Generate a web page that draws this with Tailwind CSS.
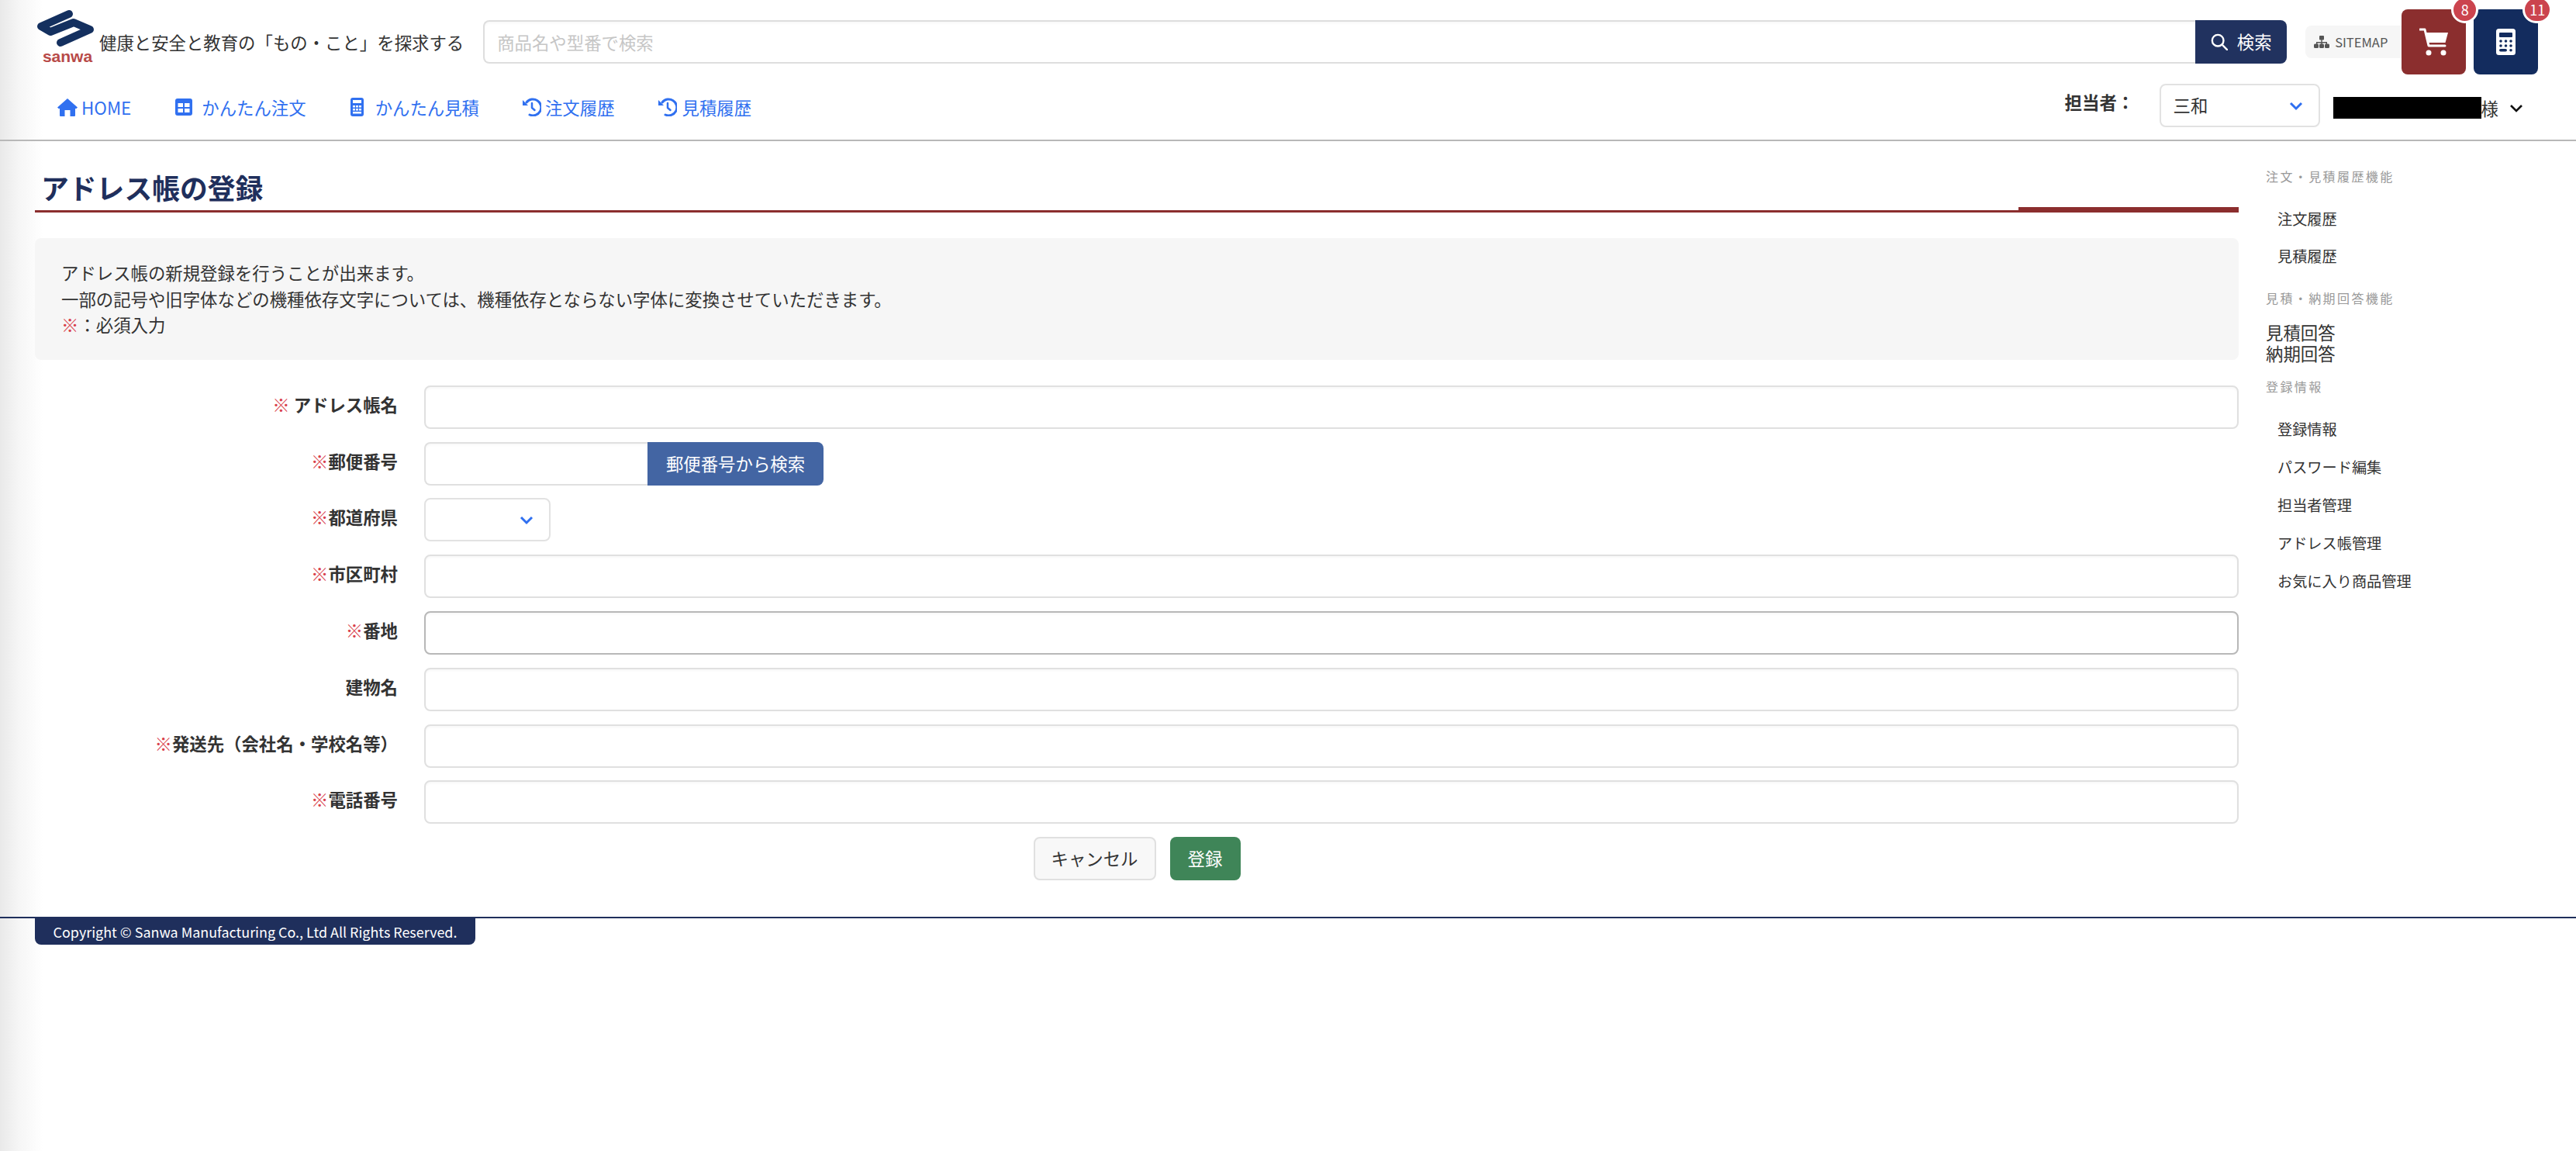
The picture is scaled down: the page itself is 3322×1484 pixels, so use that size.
<!DOCTYPE html>
<html lang="ja">
<head>
    <meta charset="UTF-8">
    <title>アドレス帳の登録</title>
    <script src="https://cdn.jsdelivr.net/npm/@tailwindcss/browser@4"></script>
</head>
<body class="bg-white">
<div class="w-[3322px] h-[1484px] overflow-hidden bg-[linear-gradient(90deg,#e9e9e9_0px,#f6f6f6_25px,#ffffff_55px)] font-['Noto_Sans_CJK_JP','Noto_Sans',sans-serif] text-[22.4px] text-[#333333]">

    <!-- header -->
    <header class="h-[182px] border-b-2 border-[#b8b8b8]">
        <div class="flex h-[96px] items-start pl-[46px]">
            <a class="flex w-[72px] flex-col items-center pt-[14px]">
                <svg class="h-[46px] w-[72px] overflow-visible" viewBox="46 14 72 46" fill="none">
                    <path d="M89 18 L53 34 L65 41 L95 29 L116 38 L78 55" stroke="#14305f" stroke-width="10" stroke-linejoin="round" stroke-linecap="round"/>
                </svg>
                <span class="ml-[10px] mt-[3px] font-['Liberation_Sans',sans-serif] text-[21px] leading-[20px] font-bold text-[#b84a48]">sanwa</span>
            </a>
            <p class="ml-[10px] mt-[37px] leading-[34px] whitespace-nowrap">健康と安全と教育の「もの・こと」を探求する</p>
            <div class="ml-[25px] mt-[26px] flex h-[56px] w-[2326px]">
                <input class="h-full flex-1 rounded-l-lg border-2 border-r-0 border-[#dedede] px-[16px] shadow-[inset_0_2px_3px_rgba(0,0,0,0.03)] placeholder:text-[#c6c6c6]" placeholder="商品名や型番で検索">
                <button class="flex w-[118px] items-center justify-center gap-[12px] rounded-r-lg bg-[#21325f] text-white">
                    <svg class="h-[22px] w-[22px]" viewBox="0 0 24 24" fill="none" stroke="white" stroke-width="2.6"><circle cx="10" cy="10" r="8"/><path d="M16 16l7 7" stroke-linecap="round"/></svg>
                    <span>検索</span>
                </button>
            </div>
            <a class="ml-[24px] mt-[33px] flex h-[42px] w-[124px] items-center gap-[7px] rounded-l-lg bg-[#f6f6f6] pl-[11px] text-[16.5px] text-[#555555]">
                <svg class="h-[16px] w-[20px]" viewBox="0 0 20 16" fill="#555555"><rect x="7" y="0" width="6" height="5.5" rx="1"/><path d="M9.3 5h1.4v3H17v3h-1.400V9.400H10.700V11H9.300V9.400H4.400V11H3V8h6.300z"/><rect x="0" y="10.500" width="6" height="5.500" rx="1.500"/><rect x="7" y="10.500" width="6" height="5.500" rx="1.500"/><rect x="14" y="10.500" width="6" height="5.500" rx="1.500"/></svg>
                <span>SITEMAP</span>
            </a>
            <a class="relative mt-[12px] flex h-[84px] w-[83px] items-center justify-center rounded-lg bg-[#8b2e2e]">
                <svg class="h-[36px] w-[38px]" viewBox="0 0 38 36" fill="none"><path d="M1 2h6l5 21h21" stroke="white" stroke-width="3" stroke-linecap="round" stroke-linejoin="round"/><path d="M8 6h29l-3.500 13H11z" fill="white"/><circle cx="12" cy="32" r="3.500" fill="white"/><circle cx="31" cy="32" r="3.500" fill="white"/></svg>
                <span class="absolute right-[-16px] top-[-17px] z-10 flex h-[35px] w-[35px] items-center justify-center rounded-full border-[3px] border-white bg-[#cb444e] text-[18px] text-white">8</span>
            </a>
            <a class="relative ml-[10px] mt-[12px] flex h-[84px] w-[83px] items-center justify-center rounded-lg bg-[#132c5e]">
                <svg class="h-[34px] w-[25px]" viewBox="0 0 25 34"><rect width="25" height="34" rx="3.500" fill="white"/><rect x="4" y="5" width="17" height="6" rx="1" fill="#132c5e"/><g fill="#132c5e"><circle cx="6" cy="16" r="1.800"/><circle cx="12.500" cy="16" r="1.800"/><circle cx="19" cy="16" r="1.800"/><circle cx="6" cy="22" r="1.800"/><circle cx="12.500" cy="22" r="1.800"/><circle cx="19" cy="22" r="1.800"/><rect x="4" y="26" width="10" height="3.600" rx="1.800"/><circle cx="19" cy="27.800" r="1.800"/></g></svg>
                <span class="absolute right-[-18px] top-[-17px] z-10 flex h-[35px] w-[38px] items-center justify-center rounded-full border-[3px] border-white bg-[#cb444e] text-[18px] text-white">11</span>
            </a>
        </div>
        <div class="flex h-[84px] items-start">
            <nav class="flex pl-[74px] pt-[25px] leading-[34px] text-[#3070f0] whitespace-nowrap">
                <a class="flex items-center gap-[5px]">
                    <svg class="h-[23px] w-[26px]" viewBox="0 0 26 23" fill="currentColor"><path d="M13 0l13 11.500-1.500 1.500H23v9a1 1 0 0 1-1 1h-5.500v-8h-7v8H4a1 1 0 0 1-1-1v-9H1.500L0 11.500z"/></svg>
                    <span>HOME</span>
                </a>
                <a class="ml-[57px] flex items-center gap-[12px]">
                    <svg class="h-[22px] w-[22px]" viewBox="0 0 22 22"><rect width="22" height="22" rx="3" fill="currentColor"/><rect x="3.500" y="6" width="6.500" height="5" fill="white"/><rect x="12" y="6" width="6.500" height="5" fill="white"/><rect x="3.500" y="13" width="6.500" height="5" fill="white"/><rect x="12" y="13" width="6.500" height="5" fill="white"/></svg>
                    <span>かんたん注文</span>
                </a>
                <a class="ml-[57px] flex items-center gap-[15px]">
                    <svg class="h-[24px] w-[17px]" viewBox="0 0 17 24"><rect width="17" height="24" rx="3" fill="currentColor"/><rect x="3" y="3" width="11" height="4" fill="white"/><g fill="white"><rect x="3" y="10" width="3" height="2.500"/><rect x="7" y="10" width="3" height="2.500"/><rect x="11" y="10" width="3" height="2.500"/><rect x="3" y="14" width="3" height="2.500"/><rect x="7" y="14" width="3" height="2.500"/><rect x="11" y="14" width="3" height="2.500"/><rect x="3" y="18" width="11" height="2.500"/></g></svg>
                    <span>かんたん見積</span>
                </a>
                <a class="ml-[55px] flex items-center gap-[5px]">
                    <svg class="h-[24px] w-[25px]" viewBox="0 0 25 24" fill="none" stroke="currentColor"><path d="M6 6A10.500 10.500 0 1 1 10 22" stroke-width="3" stroke-linecap="round"/><path d="M1 3v7h7z" fill="currentColor" stroke="none"/><path d="M13 7v6l3.500 3" stroke-width="2.500" stroke-linecap="round" stroke-linejoin="round"/></svg>
                    <span>注文履歴</span>
                </a>
                <a class="ml-[55px] flex items-center gap-[7px]">
                    <svg class="h-[24px] w-[25px]" viewBox="0 0 25 24" fill="none" stroke="currentColor"><path d="M6 6A10.500 10.500 0 1 1 10 22" stroke-width="3" stroke-linecap="round"/><path d="M1 3v7h7z" fill="currentColor" stroke="none"/><path d="M13 7v6l3.500 3" stroke-width="2.500" stroke-linecap="round" stroke-linejoin="round"/></svg>
                    <span>見積履歴</span>
                </a>
            </nav>
            <div class="ml-auto flex items-start pr-[68px] pt-[12px]">
                <span class="mt-[6px] w-[122px] leading-[34px] font-bold">担当者：</span>
                <div class="relative h-[56px] w-[207px]">
                    <select class="h-full w-full appearance-none rounded-lg border-2 border-[#e2e2e2] bg-white pl-[16px]"><option>三和</option></select>
                    <svg class="absolute right-[22px] top-[23px] h-[12px] w-[18px]" viewBox="0 0 18 12" fill="none" stroke="#2f6ff0" stroke-width="3"><path d="M2 2l7 7 7-7"/></svg>
                </div>
                <div class="ml-[17px] mt-[17px] h-[28px] w-[191px] bg-black"></div>
                <span class="mt-[14px] leading-[34px]">様</span>
                <svg class="ml-[14px] mt-[26px] h-[11px] w-[18px]" viewBox="0 0 18 11" fill="none" stroke="#111111" stroke-width="2.600"><path d="M2 2l7 7 7-7"/></svg>
            </div>
        </div>
    </header>

    <div class="flex h-[1002px] flex-col">
        <div class="flex pl-[45px]">
            <!-- main -->
            <main class="w-[2842px] shrink-0">
                <div class="relative mt-[32px] h-[60px] border-b-[3px] border-[#8b2e2e]">
                    <h1 class="pl-[8px] pt-[2px] text-[35.8px] leading-[50px] font-bold text-[#1f2f5c]">アドレス帳の登録</h1>
                    <div class="absolute bottom-[-3px] right-0 h-[7px] w-[284px] bg-[#8b2e2e]"></div>
                </div>
                <div class="mt-[33px] rounded-lg bg-[#f6f6f6] px-[34px] py-[28px] leading-[33.6px]">
                    <p>アドレス帳の新規登録を行うことが出来ます。</p>
                    <p>一部の記号や旧字体などの機種依存文字については、機種依存とならない字体に変換させていただきます。</p>
                    <p><span class="text-[#d9414c]">※</span>：必須入力</p>
                </div>

                <form class="mt-[33px] flex flex-col gap-[16.8px]">
                    <div class="flex h-[56px]">
                        <label class="w-[468px] pt-[7px] text-right leading-[34px] font-bold"><span class="font-normal text-[#d9414c]">※ </span>アドレス帳名</label>
                        <input class="ml-[34px] flex-1 rounded-lg border-2 border-[#e0e0e0] shadow-[inset_0_2px_3px_rgba(0,0,0,0.03)]">
                    </div>
                    <div class="flex h-[56px]">
                        <label class="w-[468px] pt-[7px] text-right leading-[34px] font-bold"><span class="font-normal text-[#d9414c]">※</span>郵便番号</label>
                        <input class="ml-[34px] w-[288px] rounded-l-lg border-2 border-r-0 border-[#e0e0e0] shadow-[inset_0_2px_3px_rgba(0,0,0,0.03)]">
                        <button type="button" class="w-[227px] rounded-r-lg bg-[#4365a3] text-white">郵便番号から検索</button>
                    </div>
                    <div class="flex h-[56px]">
                        <label class="w-[468px] pt-[7px] text-right leading-[34px] font-bold"><span class="font-normal text-[#d9414c]">※</span>都道府県</label>
                        <div class="relative ml-[34px] w-[163px]">
                            <select class="h-full w-full appearance-none rounded-lg border-2 border-[#e2e2e2] bg-white"></select>
                            <svg class="absolute right-[22px] top-[23px] h-[12px] w-[18px]" viewBox="0 0 18 12" fill="none" stroke="#2f6ff0" stroke-width="3"><path d="M2 2l7 7 7-7"/></svg>
                        </div>
                    </div>
                    <div class="flex h-[56px]">
                        <label class="w-[468px] pt-[7px] text-right leading-[34px] font-bold"><span class="font-normal text-[#d9414c]">※</span>市区町村</label>
                        <input class="ml-[34px] flex-1 rounded-lg border-2 border-[#e0e0e0] shadow-[inset_0_2px_3px_rgba(0,0,0,0.03)]">
                    </div>
                    <div class="flex h-[56px]">
                        <label class="w-[468px] pt-[7px] text-right leading-[34px] font-bold"><span class="font-normal text-[#d9414c]">※</span>番地</label>
                        <input class="ml-[34px] flex-1 rounded-lg border-2 border-[#b8b8b8] shadow-[inset_0_2px_3px_rgba(0,0,0,0.03)]">
                    </div>
                    <div class="flex h-[56px]">
                        <label class="w-[468px] pt-[7px] text-right leading-[34px] font-bold">建物名</label>
                        <input class="ml-[34px] flex-1 rounded-lg border-2 border-[#e0e0e0] shadow-[inset_0_2px_3px_rgba(0,0,0,0.03)]">
                    </div>
                    <div class="flex h-[56px]">
                        <label class="w-[468px] pt-[7px] text-right leading-[34px] font-bold"><span class="font-normal text-[#d9414c]">※</span>発送先（会社名・学校名等）</label>
                        <input class="ml-[34px] flex-1 rounded-lg border-2 border-[#e0e0e0] shadow-[inset_0_2px_3px_rgba(0,0,0,0.03)]">
                    </div>
                    <div class="flex h-[56px]">
                        <label class="w-[468px] pt-[7px] text-right leading-[34px] font-bold"><span class="font-normal text-[#d9414c]">※</span>電話番号</label>
                        <input class="ml-[34px] flex-1 rounded-lg border-2 border-[#e0e0e0] shadow-[inset_0_2px_3px_rgba(0,0,0,0.03)]">
                    </div>
                    <div class="flex h-[56px] justify-center gap-[18px]">
                        <button type="button" class="w-[158px] rounded-lg border-2 border-[#e0e0e0] bg-[#f8f8f8]">キャンセル</button>
                        <button type="button" class="w-[91px] rounded-lg bg-[#3f8558] text-white">登録</button>
                    </div>
                </form>
            </main>

            <!-- side menu -->
            <aside class="flex-1 pl-[35px] pt-[33px] text-[19.2px] text-[#333333]">
                <p class="text-[16px] leading-[24px] tracking-[2.4px] text-[#999999]">注文・見積履歴機能</p>
                <ul class="mt-[18.6px] pl-[15px] leading-[48.8px]">
                    <li>注文履歴</li>
                    <li>見積履歴</li>
                </ul>
                <p class="mt-[16.8px] text-[16px] leading-[24px] tracking-[2.4px] text-[#999999]">見積・納期回答機能</p>
                <ul class="mt-[19.5px] text-[22.4px] leading-[27px]">
                    <li>見積回答</li>
                    <li>納期回答</li>
                </ul>
                <p class="mt-[17px] text-[16px] leading-[24px] tracking-[2.4px] text-[#999999]">登録情報</p>
                <ul class="mt-[19px] pl-[15px] leading-[48.8px]">
                    <li>登録情報</li>
                    <li>パスワード編集</li>
                    <li>担当者管理</li>
                    <li>アドレス帳管理</li>
                    <li>お気に入り商品管理</li>
                </ul>
            </aside>
        </div>

        <!-- footer -->
        <footer class="mt-[47px] border-t-2 border-[#1f2f5c] pl-[45px]">
            <p class="w-[568px] rounded-b-lg bg-[#1f2f5c] py-[2px] text-center text-[17.92px] leading-[30px] whitespace-nowrap text-white">Copyright © Sanwa Manufacturing Co., Ltd All Rights Reserved.</p>
        </footer>
    </div>
</div>
</body>
</html>
